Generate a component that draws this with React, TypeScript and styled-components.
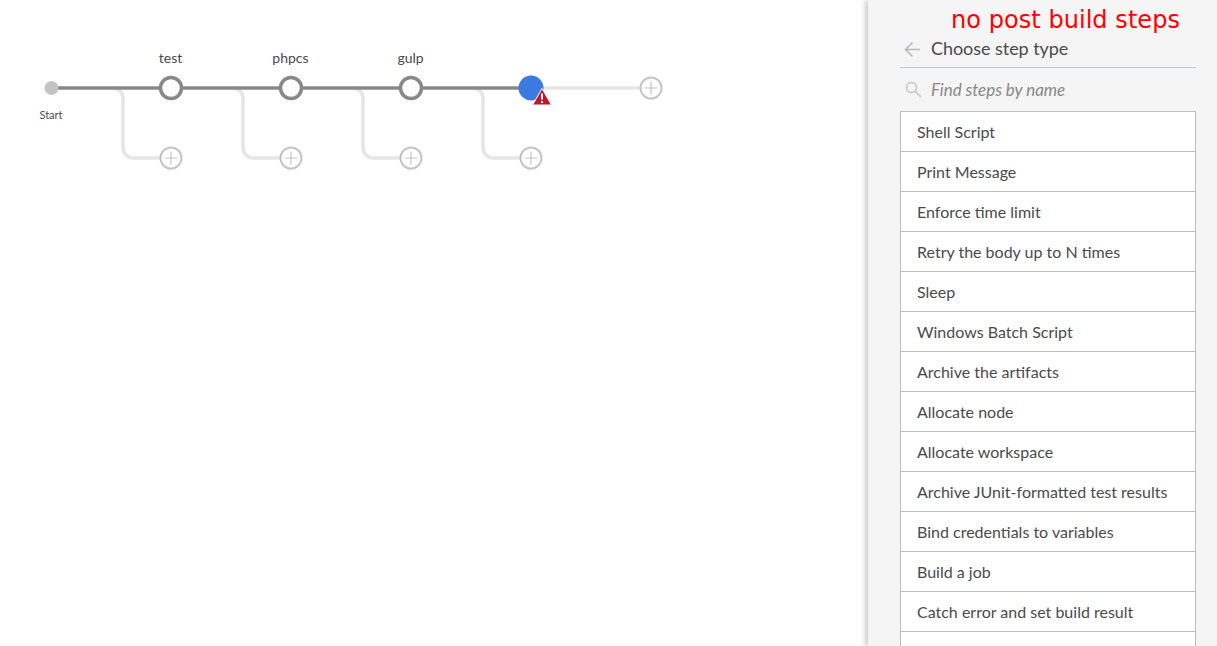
import { createGlobalStyle, styled } from 'styled-components';

const STEPS = [
  'Shell Script',
  'Print Message',
  'Enforce time limit',
  'Retry the body up to N times',
  'Sleep',
  'Windows Batch Script',
  'Archive the artifacts',
  'Allocate node',
  'Allocate workspace',
  'Archive JUnit-formatted test results',
  'Bind credentials to variables',
  'Build a job',
  'Catch error and set build result',
  'Change current directory',
];

const STAGE_X = [171, 291, 411, 531];
const MAIN_Y = 88;
const BRANCH_Y = 158;

const GlobalStyle = createGlobalStyle`
  html, body {
    margin: 0;
    height: 100%;
    overflow: hidden;
    background: #fff;
    font-family: Lato, "Liberation Sans", sans-serif;
  }
`;

const Page = styled.div`
  display: flex;
  width: 1217px;
  height: 646px;
  overflow: hidden;
`;

const Editor = styled.main`
  flex: 1;
  min-width: 0;
`;

const Sheet = styled.aside`
  width: 349px;
  height: 646px;
  box-sizing: border-box;
  padding: 5px 21px 0 32px;
  background: #f5f5f5;
  box-shadow: -3px 0 5px rgba(0, 0, 0, 0.2);
  overflow: hidden;
`;

const Note = styled.div`
  height: 30px;
  padding-left: 51px;
  font: 24px/30px "DejaVu Sans", sans-serif;
  letter-spacing: 0.05px;
  color: #ff0000;
  white-space: nowrap;
`;

const Title = styled.div`
  display: flex;
  align-items: center;
  gap: 11px;
  height: 26px;
  padding: 0 0 6px 4px;
  border-bottom: 1px solid #c3ccd8;
  font-size: 18px;
  letter-spacing: -0.05px;
  color: #4a4a4a;
`;

const SearchRow = styled.div`
  display: flex;
  align-items: center;
  gap: 9px;
  height: 43px;
  padding-left: 5px;
  font-size: 16.9px;
  font-style: italic;
  color: #888;
`;

const StepList = styled.ul`
  list-style: none;
  margin: 0;
  padding: 0;
`;

const StepItem = styled.li`
  height: 39px;
  margin-top: -1px;
  padding-left: 16px;
  border: 1px solid #bfbfbf;
  background: #fff;
  font-size: 16px;
  line-height: 39px;
  color: #4a4a4a;
  white-space: nowrap;

  &:first-child {
    margin-top: 0;
  }
`;

const StageLabel = styled.text<{ $small?: boolean }>`
  font-family: Lato, sans-serif;
  font-size: ${({ $small }) => ($small ? '11px' : '14px')};
  fill: #4a4a4a;
  text-anchor: middle;
`;

const AddButton = ({ x, y }: { x: number; y: number }) => (
  <g fill="#fff" stroke="#c4c4c4">
    <circle cx={x} cy={y} r={10.5} strokeWidth={2} />
    <path d={`M${x - 6.5} ${y}h13M${x} ${y - 6.5}v13`} strokeWidth={1.2} />
  </g>
);

const PipelineGraph = () => (
  <svg width="868" height="646" style={{ display: 'block' }}>
    <g fill="none" stroke="#e6e6e6" strokeWidth={3.5}>
      {STAGE_X.map((x) => (
        <path
          key={x}
          d={`M${x - 60} ${MAIN_Y}h2a10 10 0 0 1 10 10v50a10 10 0 0 0 10 10h38`}
        />
      ))}
      <path d={`M531 ${MAIN_Y}H651`} />
    </g>
    <path d={`M51 ${MAIN_Y}H531`} stroke="#888" strokeWidth={3.5} />
    <circle cx={51.5} cy={MAIN_Y} r={7} fill="#c4c4c4" />
    {STAGE_X.slice(0, 3).map((x) => (
      <circle key={x} cx={x} cy={MAIN_Y} r={10.5} fill="#fff" stroke="#888" strokeWidth={3.5} />
    ))}
    <circle cx={531} cy={MAIN_Y} r={12.5} fill="#3b7be0" />
    <path d="M542 88.5l9.5 16.5h-19z" fill="#c4182a" stroke="#fff" strokeWidth={1} />
    <path d="M542 93.5v6M542 101v2" stroke="#fff" strokeWidth={2} />
    {STAGE_X.map((x) => (
      <AddButton key={x} x={x} y={BRANCH_Y} />
    ))}
    <AddButton x={651} y={MAIN_Y} />
    <StageLabel $small x={51} y={119}>Start</StageLabel>
    <StageLabel x={170.5} y={63}>test</StageLabel>
    <StageLabel x={290.5} y={63}>phpcs</StageLabel>
    <StageLabel x={410.5} y={63}>gulp</StageLabel>
  </svg>
);

const App = () => (
  <Page>
    <GlobalStyle />
    <Editor>
      <PipelineGraph />
    </Editor>
    <Sheet>
      <Note>no post build steps</Note>
      <Title>
        <svg width="16" height="19" viewBox="0 0 16 19" fill="none" stroke="#a9bccb" strokeWidth="1.6">
          <path d="M16 10.5H1.5M8.5 3.5L1.5 10.5L8.5 17.5" />
        </svg>
        Choose step type
      </Title>
      <SearchRow>
        <svg width="17" height="17" viewBox="0 0 17 17" fill="none" stroke="#cfcfcf" strokeWidth="2">
          <circle cx="6.5" cy="6.5" r="5" />
          <path d="M10.5 10.5l5.5 5.5" />
        </svg>
        Find steps by name
      </SearchRow>
      <StepList>
        {STEPS.map((step) => (
          <StepItem key={step}>{step}</StepItem>
        ))}
      </StepList>
    </Sheet>
  </Page>
);

export default App;
